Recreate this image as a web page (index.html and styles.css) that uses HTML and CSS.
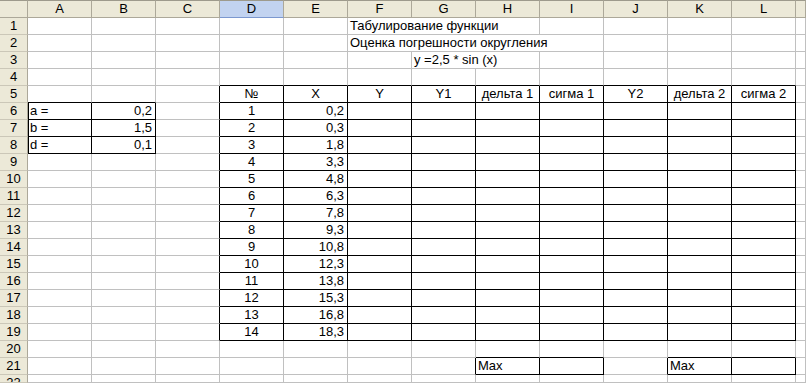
FILE: index.html
```
<!DOCTYPE html>
<html lang="ru">
<head>
<meta charset="utf-8">
<title>Табулирование функции</title>
<link rel="stylesheet" href="styles.css">
</head>
<body>
<div class="sheet">
  <div class="corner"></div>
  <div class="ch">A</div><div class="ch">B</div><div class="ch">C</div><div class="ch sel">D</div><div class="ch">E</div><div class="ch">F</div><div class="ch">G</div><div class="ch">H</div><div class="ch">I</div><div class="ch">J</div><div class="ch">K</div><div class="ch">L</div><div class="ch"></div>

  <div class="rh">1</div>
  <div class="c"></div><div class="c"></div><div class="c"></div><div class="c"></div><div class="c"></div><div class="c s3">Табулирование функции</div><div class="c"></div><div class="c"></div><div class="c"></div><div class="c"></div><div class="c"></div>

  <div class="rh">2</div>
  <div class="c"></div><div class="c"></div><div class="c"></div><div class="c"></div><div class="c"></div><div class="c s4">Оценка погрешности округления</div><div class="c"></div><div class="c"></div><div class="c"></div><div class="c"></div>

  <div class="rh">3</div>
  <div class="c"></div><div class="c"></div><div class="c"></div><div class="c"></div><div class="c"></div><div class="c"></div><div class="c s2">y =2,5 * sin (x)</div><div class="c"></div><div class="c"></div><div class="c"></div><div class="c"></div><div class="c"></div>

  <div class="rh">4</div>
  <div class="c"></div><div class="c"></div><div class="c"></div><div class="c kb"></div><div class="c kb"></div><div class="c kb"></div><div class="c kb"></div><div class="c kb"></div><div class="c kb"></div><div class="c kb"></div><div class="c kb"></div><div class="c kb"></div><div class="c"></div>

  <div class="rh">5</div>
  <div class="c kb"></div><div class="c kb"></div><div class="c kr"></div><div class="c kr kb m">№</div><div class="c kr kb m">X</div><div class="c kr kb m">Y</div><div class="c kr kb m">Y1</div><div class="c kr kb m">дельта 1</div><div class="c kr kb m">сигма 1</div><div class="c kr kb m">Y2</div><div class="c kr kb m">дельта 2</div><div class="c kr kb m">сигма 2</div><div class="c"></div>

  <div class="rh">6</div>
  <div class="c kl kr kb">a =</div><div class="c kr kb r">0,2</div><div class="c kr"></div><div class="c kr kb m">1</div><div class="c kr kb r">0,2</div><div class="c kr kb"></div><div class="c kr kb"></div><div class="c kr kb"></div><div class="c kr kb"></div><div class="c kr kb"></div><div class="c kr kb"></div><div class="c kr kb"></div><div class="c"></div>

  <div class="rh">7</div>
  <div class="c kl kr kb">b =</div><div class="c kr kb r">1,5</div><div class="c kr"></div><div class="c kr kb m">2</div><div class="c kr kb r">0,3</div><div class="c kr kb"></div><div class="c kr kb"></div><div class="c kr kb"></div><div class="c kr kb"></div><div class="c kr kb"></div><div class="c kr kb"></div><div class="c kr kb"></div><div class="c"></div>

  <div class="rh">8</div>
  <div class="c kl kr kb">d =</div><div class="c kr kb r">0,1</div><div class="c kr"></div><div class="c kr kb m">3</div><div class="c kr kb r">1,8</div><div class="c kr kb"></div><div class="c kr kb"></div><div class="c kr kb"></div><div class="c kr kb"></div><div class="c kr kb"></div><div class="c kr kb"></div><div class="c kr kb"></div><div class="c"></div>

  <div class="rh">9</div>
  <div class="c"></div><div class="c"></div><div class="c kr"></div><div class="c kr kb m">4</div><div class="c kr kb r">3,3</div><div class="c kr kb"></div><div class="c kr kb"></div><div class="c kr kb"></div><div class="c kr kb"></div><div class="c kr kb"></div><div class="c kr kb"></div><div class="c kr kb"></div><div class="c"></div>

  <div class="rh">10</div>
  <div class="c"></div><div class="c"></div><div class="c kr"></div><div class="c kr kb m">5</div><div class="c kr kb r">4,8</div><div class="c kr kb"></div><div class="c kr kb"></div><div class="c kr kb"></div><div class="c kr kb"></div><div class="c kr kb"></div><div class="c kr kb"></div><div class="c kr kb"></div><div class="c"></div>

  <div class="rh">11</div>
  <div class="c"></div><div class="c"></div><div class="c kr"></div><div class="c kr kb m">6</div><div class="c kr kb r">6,3</div><div class="c kr kb"></div><div class="c kr kb"></div><div class="c kr kb"></div><div class="c kr kb"></div><div class="c kr kb"></div><div class="c kr kb"></div><div class="c kr kb"></div><div class="c"></div>

  <div class="rh">12</div>
  <div class="c"></div><div class="c"></div><div class="c kr"></div><div class="c kr kb m">7</div><div class="c kr kb r">7,8</div><div class="c kr kb"></div><div class="c kr kb"></div><div class="c kr kb"></div><div class="c kr kb"></div><div class="c kr kb"></div><div class="c kr kb"></div><div class="c kr kb"></div><div class="c"></div>

  <div class="rh">13</div>
  <div class="c"></div><div class="c"></div><div class="c kr"></div><div class="c kr kb m">8</div><div class="c kr kb r">9,3</div><div class="c kr kb"></div><div class="c kr kb"></div><div class="c kr kb"></div><div class="c kr kb"></div><div class="c kr kb"></div><div class="c kr kb"></div><div class="c kr kb"></div><div class="c"></div>

  <div class="rh">14</div>
  <div class="c"></div><div class="c"></div><div class="c kr"></div><div class="c kr kb m">9</div><div class="c kr kb r">10,8</div><div class="c kr kb"></div><div class="c kr kb"></div><div class="c kr kb"></div><div class="c kr kb"></div><div class="c kr kb"></div><div class="c kr kb"></div><div class="c kr kb"></div><div class="c"></div>

  <div class="rh">15</div>
  <div class="c"></div><div class="c"></div><div class="c kr"></div><div class="c kr kb m">10</div><div class="c kr kb r">12,3</div><div class="c kr kb"></div><div class="c kr kb"></div><div class="c kr kb"></div><div class="c kr kb"></div><div class="c kr kb"></div><div class="c kr kb"></div><div class="c kr kb"></div><div class="c"></div>

  <div class="rh">16</div>
  <div class="c"></div><div class="c"></div><div class="c kr"></div><div class="c kr kb m">11</div><div class="c kr kb r">13,8</div><div class="c kr kb"></div><div class="c kr kb"></div><div class="c kr kb"></div><div class="c kr kb"></div><div class="c kr kb"></div><div class="c kr kb"></div><div class="c kr kb"></div><div class="c"></div>

  <div class="rh">17</div>
  <div class="c"></div><div class="c"></div><div class="c kr"></div><div class="c kr kb m">12</div><div class="c kr kb r">15,3</div><div class="c kr kb"></div><div class="c kr kb"></div><div class="c kr kb"></div><div class="c kr kb"></div><div class="c kr kb"></div><div class="c kr kb"></div><div class="c kr kb"></div><div class="c"></div>

  <div class="rh">18</div>
  <div class="c"></div><div class="c"></div><div class="c kr"></div><div class="c kr kb m">13</div><div class="c kr kb r">16,8</div><div class="c kr kb"></div><div class="c kr kb"></div><div class="c kr kb"></div><div class="c kr kb"></div><div class="c kr kb"></div><div class="c kr kb"></div><div class="c kr kb"></div><div class="c"></div>

  <div class="rh">19</div>
  <div class="c"></div><div class="c"></div><div class="c kr"></div><div class="c kr kb m">14</div><div class="c kr kb r">18,3</div><div class="c kr kb"></div><div class="c kr kb"></div><div class="c kr kb"></div><div class="c kr kb"></div><div class="c kr kb"></div><div class="c kr kb"></div><div class="c kr kb"></div><div class="c"></div>

  <div class="rh">20</div>
  <div class="c"></div><div class="c"></div><div class="c"></div><div class="c"></div><div class="c"></div><div class="c"></div><div class="c"></div><div class="c kb"></div><div class="c kb"></div><div class="c"></div><div class="c kb"></div><div class="c kb"></div><div class="c"></div>

  <div class="rh">21</div>
  <div class="c"></div><div class="c"></div><div class="c"></div><div class="c"></div><div class="c"></div><div class="c"></div><div class="c kr"></div><div class="c kr kb">Max</div><div class="c kr kb"></div><div class="c kr"></div><div class="c kr kb">Max</div><div class="c kr kb"></div><div class="c"></div>

  <div class="rh">22</div>
  <div class="c"></div><div class="c"></div><div class="c"></div><div class="c"></div><div class="c"></div><div class="c"></div><div class="c"></div><div class="c"></div><div class="c"></div><div class="c"></div><div class="c"></div><div class="c"></div><div class="c"></div>
</div>
</body>
</html>
```
FILE: styles.css
```
* { box-sizing: border-box; }
html, body {
  margin: 0;
  padding: 0;
  background: #fff;
  overflow: hidden;
}
body {
  font-family: "Liberation Sans", Arial, sans-serif;
  font-size: 13px;
  color: #000;
}
.sheet {
  display: grid;
  grid-template-columns: 28px repeat(12, 64px) 10px;
  grid-template-rows: 18px repeat(21, 17px) 8px;
  width: 806px;
  height: 383px;
}
.corner, .ch, .rh {
  background: #ece9d8;
  line-height: 16px;
  text-align: center;
  white-space: nowrap;
  overflow: hidden;
}
.corner, .ch {
  border-top: 1px solid #9d9a8c;
  border-right: 1px solid #aca899;
  border-bottom: 1px solid #aca899;
}
.ch.sel {
  background: #c2d3f0;
  border-bottom-color: #7c98cf;
}
.rh {
  border-right: 1px solid #aca899;
  border-bottom: 1px solid #cbc7b8;
}
.c {
  border-right: 1px solid #c0c0c0;
  border-bottom: 1px solid #c0c0c0;
  padding: 0 2px;
  line-height: 16px;
  white-space: nowrap;
  overflow: hidden;
}
.kr { border-right-color: #000; }
.kb { border-bottom-color: #000; }
.kl { border-left: 1px solid #000; padding-left: 1px; }
.r { text-align: right; padding-right: 3px; }
.m { text-align: center; }
.s2 { grid-column: span 2; }
.s3 { grid-column: span 3; }
.s4 { grid-column: span 4; }
```
